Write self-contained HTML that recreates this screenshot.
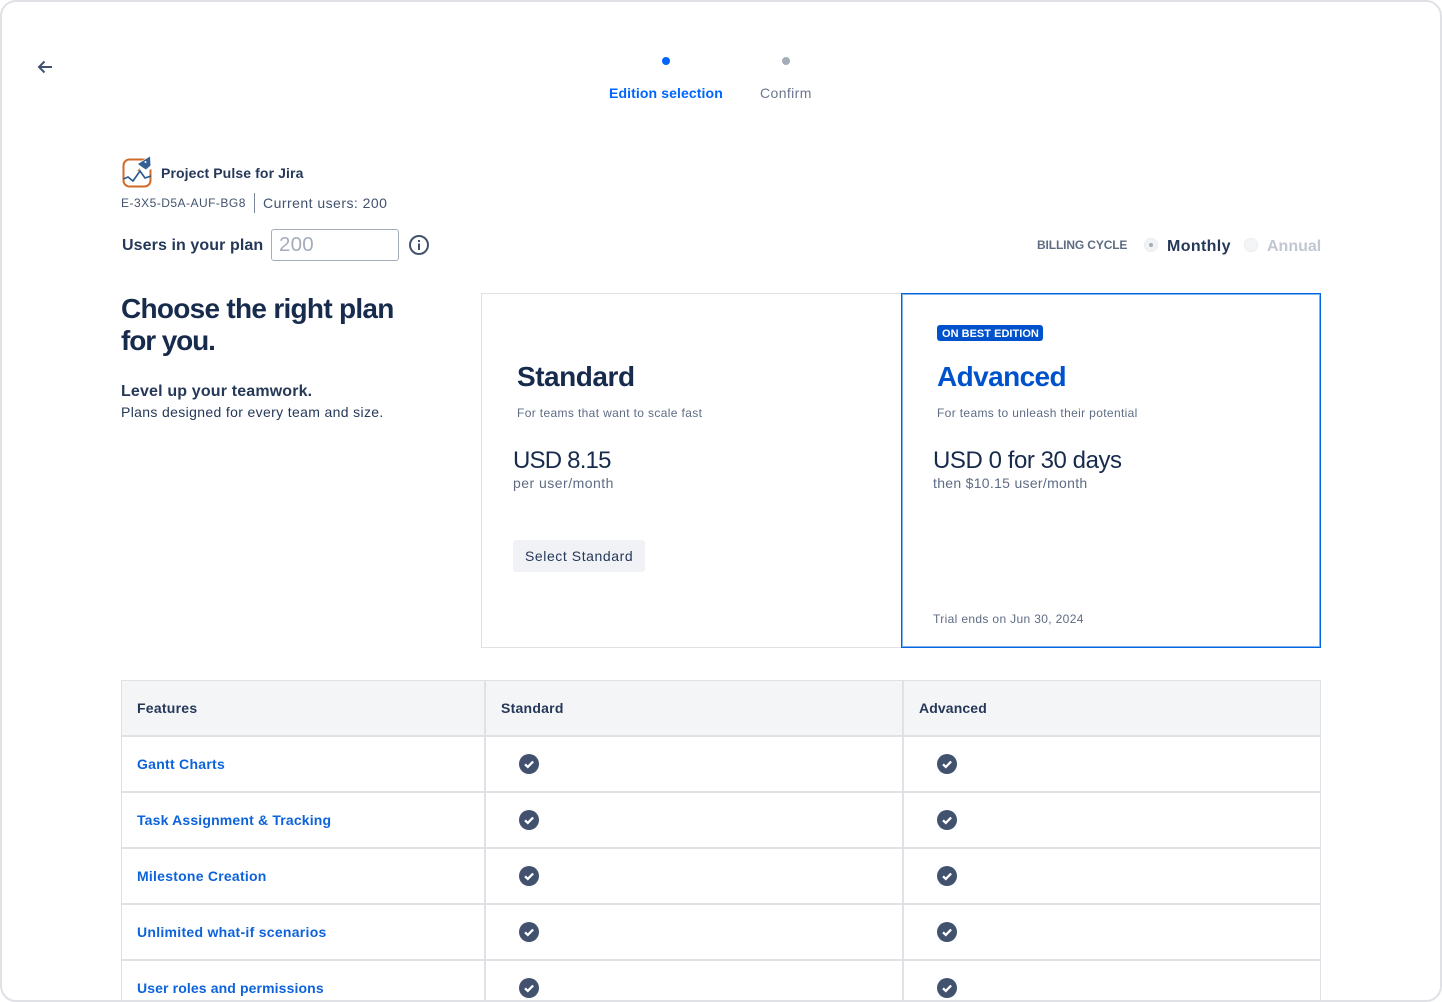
<!DOCTYPE html>
<html lang="en">
<head>
<meta charset="utf-8">
<title>Choose the right plan</title>
<style>
html,body{margin:0;padding:0;background:#fff;}
body{width:1442px;height:1002px;overflow:hidden;position:relative;font-family:"Liberation Sans",sans-serif;color:#172B4D;}
.frame{position:absolute;left:0;top:0;width:1442px;height:1002px;box-sizing:border-box;border:2px solid #DFE1E6;border-radius:16px;z-index:5;pointer-events:none;}
.t{position:absolute;white-space:nowrap;line-height:20px;}
.link{color:#0C63DB;font-weight:bold;font-size:14px;left:137px;}
.b{position:absolute;background:#DFE1E6;}
.c{position:absolute;width:20px;height:20px;}
</style>
</head>
<body>
<div class="frame"></div>

<svg style="position:absolute;left:36px;top:58px" width="18" height="18" viewBox="0 0 18 18"><path d="M3 9H16M8.500 3.500L3 9l5.500 5.500" fill="none" stroke="#42526E" stroke-width="2"/></svg>

<div style="position:absolute;left:662px;top:57px;width:8px;height:8px;border-radius:50%;background:#0065FF"></div>
<div style="position:absolute;left:782px;top:57px;width:8px;height:8px;border-radius:50%;background:#A5ADBA"></div>
<div class="t" style="left:609px;top:83px;font-size:14px;font-weight:bold;color:#0065FF;letter-spacing:.11px">Edition selection</div>
<div class="t" style="left:760px;top:83px;font-size:14px;color:#6B778C;letter-spacing:.4px">Confirm</div>

<svg style="position:absolute;left:121px;top:156px" width="32" height="32" viewBox="0 0 32 32">
<rect x="2.500" y="3.500" width="27" height="27" rx="6" fill="none" stroke="#CF6B27" stroke-width="2"/>
<path d="M2.500 23L7 21l5 4 7-10 5 7 6-2" fill="none" stroke="#2F5C8F" stroke-width="1.700"/>
<path d="M15 8L31-1v14l-6 2z" fill="#fff"/>
<path d="M17 8L29 .5l.5 9-4.500 4-4-2.500z" fill="#355E95"/>
<circle cx="24.500" cy="6" r="1" fill="#fff"/>
<path d="M16 15l3-3-.5 3z" fill="#E0702A"/>
</svg>
<div class="t" style="left:161px;top:163px;font-size:14px;font-weight:bold;letter-spacing:.11px;color:#253858">Project Pulse for Jira</div>
<div class="t" style="left:121px;top:193px;font-size:12px;color:#42526E;letter-spacing:.48px">E-3X5-D5A-AUF-BG8</div>
<div class="b" style="left:254px;top:193px;width:1px;height:20px;background:#7A869A"></div>
<div class="t" style="left:263px;top:193px;font-size:14px;color:#42526E;letter-spacing:.47px">Current users: 200</div>

<div class="t" style="left:122px;top:236px;font-size:16px;font-weight:bold;letter-spacing:.09px;color:#253858">Users in your plan</div>
<div style="position:absolute;left:271px;top:229px;width:128px;height:32px;box-sizing:border-box;border:1px solid #A5ADBA;border-radius:3px"></div>
<div class="t" style="left:279px;top:235px;font-size:20.500px;letter-spacing:.2px;color:#A5ADBA">200</div>
<svg style="position:absolute;left:408px;top:234px" width="22" height="22" viewBox="0 0 22 22"><circle cx="11" cy="11" r="9" fill="none" stroke="#42526E" stroke-width="2"/><rect x="10" y="9.500" width="2" height="6.500" fill="#42526E"/><rect x="10" y="6" width="2" height="2" fill="#42526E"/></svg>

<div class="t" style="left:1037px;top:235px;font-size:12px;font-weight:bold;color:#5E6C84;letter-spacing:-.13px">BILLING CYCLE</div>
<div style="position:absolute;left:1144px;top:238px;width:14px;height:14px;border-radius:50%;background:#F1F2F4;border:1px solid #EBECF0;box-sizing:border-box"></div>
<div style="position:absolute;left:1149px;top:243px;width:4px;height:4px;border-radius:50%;background:#A5ADBA"></div>
<div class="t" style="left:1167px;top:237px;font-size:16px;font-weight:bold;color:#253858;letter-spacing:.36px">Monthly</div>
<div style="position:absolute;left:1244px;top:238px;width:14px;height:14px;border-radius:50%;background:#F4F5F7;border:1px solid #EBECF0;box-sizing:border-box"></div>
<div class="t" style="left:1267px;top:237px;font-size:16px;font-weight:bold;color:#C1C7D0;letter-spacing:0">Annual</div>

<div class="t" style="left:121px;top:293px;font-size:28px;line-height:32px;font-weight:bold;letter-spacing:-.72px;color:#172B4D">Choose the right plan<br><span style="letter-spacing:-1.1px">for you.</span></div>
<div class="t" style="left:121px;top:382px;font-size:16px;font-weight:bold;letter-spacing:.16px;color:#253858">Level up your teamwork.</div>
<div class="t" style="left:121px;top:402px;font-size:14px;letter-spacing:.35px;color:#253858">Plans designed for every team and size.</div>

<div style="position:absolute;left:481px;top:293px;width:421px;height:355px;box-sizing:border-box;border:1px solid #DFE1E6"></div>
<div style="position:absolute;left:901px;top:293px;width:420px;height:355px;box-sizing:border-box;border:1px solid #0065E0;box-shadow:inset 0 0 0 1px #7FB2F0;background:#fff"></div>

<div class="t" style="left:517px;top:362px;font-size:28px;line-height:30px;font-weight:bold;letter-spacing:-.47px;color:#172B4D">Standard</div>
<div class="t" style="left:517px;top:403px;font-size:12px;color:#5E6C84;letter-spacing:.36px">For teams that want to scale fast</div>
<div class="t" style="left:513px;top:446px;font-size:24px;line-height:30px;color:#172B4D;letter-spacing:-.8px">USD 8.15</div>
<div class="t" style="left:513px;top:473px;font-size:14px;color:#5E6C84;letter-spacing:.48px">per user/month</div>
<div style="position:absolute;left:513px;top:540px;width:132px;height:32px;background:#F1F2F5;border-radius:3px"></div>
<div class="t" style="left:525px;top:546px;font-size:14px;color:#253858;letter-spacing:.57px">Select Standard</div>

<div style="position:absolute;left:937px;top:325px;width:106px;height:16px;background:#0052CC;border-radius:3px"></div>
<div class="t" style="left:942px;top:326px;font-size:11px;line-height:16px;font-weight:bold;color:#fff;letter-spacing:.02px">ON BEST EDITION</div>
<div class="t" style="left:937px;top:362px;font-size:28px;line-height:30px;font-weight:bold;letter-spacing:-.6px;color:#0052CC">Advanced</div>
<div class="t" style="left:937px;top:403px;font-size:12px;color:#5E6C84;letter-spacing:.35px">For teams to unleash their potential</div>
<div class="t" style="left:933px;top:446px;font-size:24px;line-height:30px;color:#172B4D;letter-spacing:-.44px">USD 0 for 30 days</div>
<div class="t" style="left:933px;top:473px;font-size:14px;color:#5E6C84;letter-spacing:.3px">then $10.15 user/month</div>
<div class="t" style="left:933px;top:609px;font-size:12px;color:#5E6C84;letter-spacing:.35px">Trial ends on Jun 30, 2024</div>

<div style="position:absolute;left:121px;top:680px;width:1200px;height:56px;background:#F4F5F7"></div>
<div class="b" style="left:121px;top:680px;width:1200px;height:1px"></div>
<div class="b" style="left:121px;top:735px;width:1200px;height:2px"></div>
<div class="b" style="left:121px;top:791px;width:1200px;height:2px"></div>
<div class="b" style="left:121px;top:847px;width:1200px;height:2px"></div>
<div class="b" style="left:121px;top:903px;width:1200px;height:2px"></div>
<div class="b" style="left:121px;top:959px;width:1200px;height:2px"></div>
<div class="b" style="left:121px;top:680px;width:1px;height:322px"></div>
<div class="b" style="left:484px;top:680px;width:2px;height:322px"></div>
<div class="b" style="left:902px;top:680px;width:2px;height:322px"></div>
<div class="b" style="left:1320px;top:680px;width:1px;height:322px"></div>

<div class="t" style="left:137px;top:698px;font-size:14px;font-weight:bold;color:#253858;letter-spacing:.25px">Features</div>
<div class="t" style="left:501px;top:698px;font-size:14px;font-weight:bold;color:#253858;letter-spacing:.25px">Standard</div>
<div class="t" style="left:919px;top:698px;font-size:14px;font-weight:bold;color:#253858;letter-spacing:.12px">Advanced</div>

<div class="t link" style="top:754px;letter-spacing:.27px">Gantt Charts</div>
<div class="t link" style="top:810px;letter-spacing:.17px">Task Assignment &amp; Tracking</div>
<div class="t link" style="top:866px;letter-spacing:.24px">Milestone Creation</div>
<div class="t link" style="top:922px;letter-spacing:.28px">Unlimited what-if scenarios</div>
<div class="t link" style="top:978px;letter-spacing:.12px">User roles and permissions</div>

<svg width="0" height="0" style="position:absolute"><defs><g id="ck"><circle cx="10" cy="10" r="10" fill="#42526E"/><path d="M6 10.300l2.800 2.600 5.300-5.300" fill="none" stroke="#fff" stroke-width="2.300"/></g></defs></svg>
<svg class="c" style="left:519px;top:754px" viewBox="0 0 20 20"><use href="#ck"/></svg>
<svg class="c" style="left:937px;top:754px" viewBox="0 0 20 20"><use href="#ck"/></svg>
<svg class="c" style="left:519px;top:810px" viewBox="0 0 20 20"><use href="#ck"/></svg>
<svg class="c" style="left:937px;top:810px" viewBox="0 0 20 20"><use href="#ck"/></svg>
<svg class="c" style="left:519px;top:866px" viewBox="0 0 20 20"><use href="#ck"/></svg>
<svg class="c" style="left:937px;top:866px" viewBox="0 0 20 20"><use href="#ck"/></svg>
<svg class="c" style="left:519px;top:922px" viewBox="0 0 20 20"><use href="#ck"/></svg>
<svg class="c" style="left:937px;top:922px" viewBox="0 0 20 20"><use href="#ck"/></svg>
<svg class="c" style="left:519px;top:978px" viewBox="0 0 20 20"><use href="#ck"/></svg>
<svg class="c" style="left:937px;top:978px" viewBox="0 0 20 20"><use href="#ck"/></svg>
</body>
</html>
